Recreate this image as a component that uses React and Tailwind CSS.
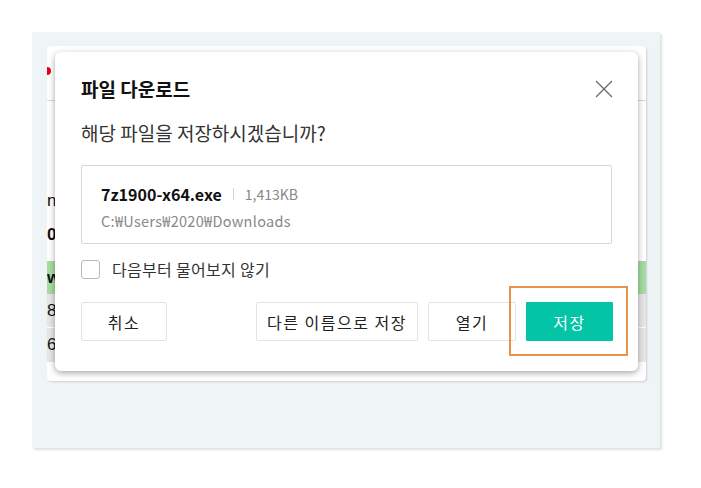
const KR = { fontFamily: '"Noto Sans CJK KR", "Noto Sans", sans-serif' }

const rows = [
  { text: 'n', cls: 'bg-white font-normal h-[34px]' },
  { text: '0', cls: 'bg-white font-bold h-[34px]' },
  { text: '', cls: 'bg-white h-[9px]' },
  { text: 'w', cls: 'bg-[#a6dba2] font-bold h-[33px]' },
  { text: '8', cls: 'bg-[#e6e6e6] border-b border-white h-[34px]' },
  { text: '6', cls: 'bg-[#e6e6e6] h-[34px]' },
]

function Backdrop() {
  // the page sitting behind the modal; only its left edge shows
  return (
    <div className="w-[599px] h-[335px] bg-white rounded-[4px] shadow-[1px_1px_2px_rgba(0,0,0,0.15)] overflow-hidden">
      <div className="h-[55px] border-b border-[#d8d8d8] flex items-center">
        <span className="w-[8px] h-[8px] rounded-full bg-[#e60012] -ml-[4px] -mt-[4px]" />
      </div>
      <div className="pt-[83px] text-[17px] text-[#111] leading-[20px]" style={{ fontFamily: '"Liberation Sans", sans-serif' }}>
        {rows.map((r, i) => (
          <div key={i} className={`flex items-center ${r.cls}`}>
            <span>{r.text}</span>
          </div>
        ))}
      </div>
    </div>
  )
}

function CloseIcon() {
  return (
    <svg width="18" height="18" viewBox="0 0 18 18" className="-mr-[1px]">
      <path d="M1 1 L17 17 M17 1 L1 17" stroke="#6b6b6b" strokeWidth="1.3" fill="none" />
    </svg>
  )
}

function Btn({ children, className = '' }) {
  return (
    <button className={`h-[39px] border border-[#e3e3e3] rounded-[2px] bg-white text-[16px] tracking-[1.5px] text-[#222] ${className}`}>
      {children}
    </button>
  )
}

function Dialog() {
  return (
    <div className="absolute left-[23px] top-[20px] w-[583px] h-[319px] bg-white rounded-[6px] shadow-[0_2px_6px_rgba(0,0,0,0.35)] px-[26px] pt-[25px]" style={KR}>
      <div className="flex items-center justify-between h-[24px]">
        <h1 className="text-[19px] font-bold text-[#111] leading-[24px]">파일 다운로드</h1>
        <CloseIcon />
      </div>
      <p className="mt-[20px] text-[19px] leading-[24px] text-[#333]">해당 파일을 저장하시겠습니까?</p>

      <div className="mt-[20px] h-[79px] border border-[#d6d6d6] rounded-[2px] pl-[19px] pt-[16px]">
        <div className="flex items-center h-[24px]">
          <span className="text-[16px] font-bold text-[#111]">7z1900-x64.exe</span>
          <span className="w-px h-[12px] bg-[#d5d5d5] mx-[11px]" />
          <span className="text-[14px] text-[#888]">1,413KB</span>
        </div>
        <div className="h-[24px] mt-[3px] flex items-center text-[14.5px] tracking-[0.3px] text-[#888]">C:₩Users₩2020₩Downloads</div>
      </div>

      <label className="mt-[15px] flex items-center h-[20px] gap-[12px]">
        <span className="w-[19px] h-[19px] border border-[#b8b8b8] rounded-[3px] bg-white" />
        <span className="text-[16px] tracking-[0.3px] text-[#333] leading-[20px]">다음부터 물어보지 않기</span>
      </label>

      <div className="mt-[23px] flex items-center -mr-[1px]">
        <Btn className="w-[86px]">취소</Btn>
        <div className="flex-1" />
        <Btn className="w-[162px]">다른 이름으로 저장</Btn>
        <Btn className="w-[88px] ml-[10px]">열기</Btn>
        <div className="relative ml-[10px]">
          <button className="h-[39px] w-[87px] bg-[#03c4a6] text-white text-[16px] tracking-[1.5px] rounded-[1px]">저장</button>
          <div className="absolute -left-[17px] -top-[16px] w-[119px] h-[70px] border-2 border-[#e8914a]" />
        </div>
      </div>
    </div>
  )
}

export default function App() {
  return (
    <div className="w-[701px] h-[488px] bg-white pt-[32px] pl-[32px]">
      <div className="relative w-[628px] h-[416px] bg-[#eff5f7] shadow-[2px_2px_2px_rgba(0,0,0,0.12)] pl-[15px] pt-[14px]">
        <Backdrop />
        <Dialog />
      </div>
    </div>
  )
}
